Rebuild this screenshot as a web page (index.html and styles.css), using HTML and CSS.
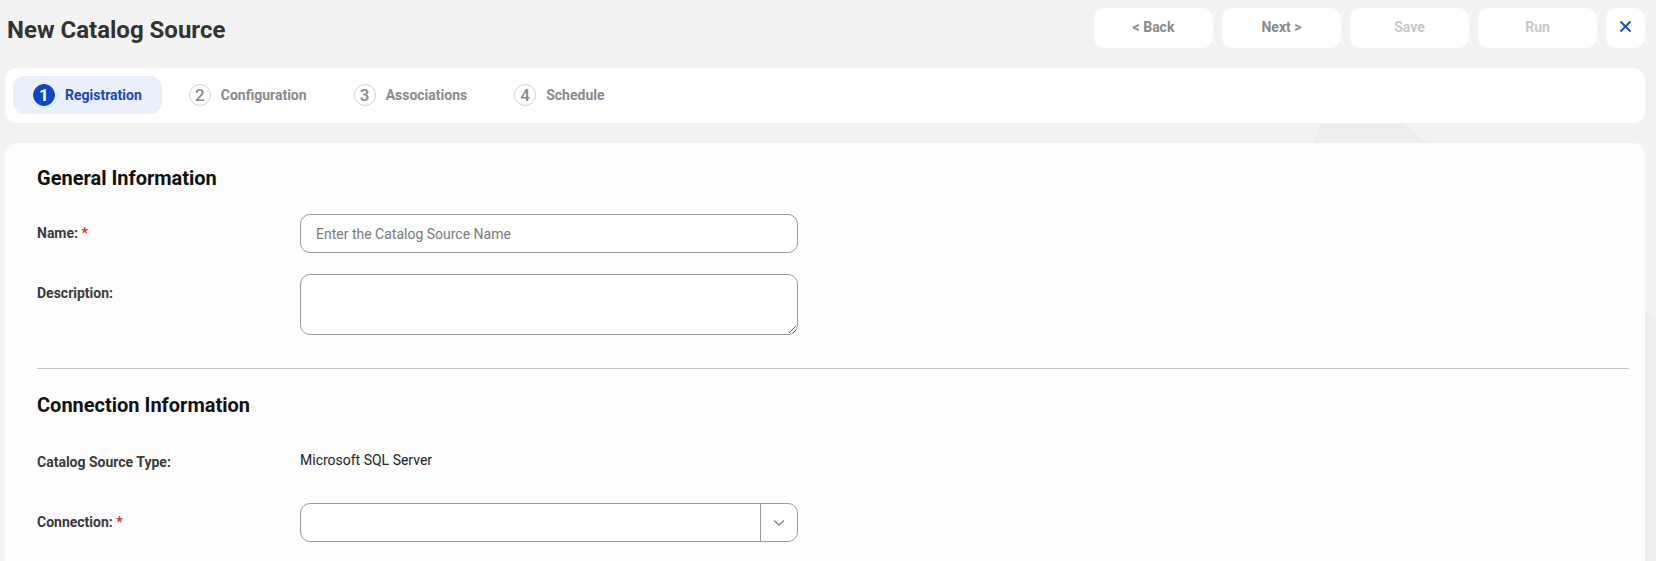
FILE: index.html
```html
<!DOCTYPE html>
<html lang="en">
<head>
    <meta charset="UTF-8">
    <meta name="viewport" content="width=device-width, initial-scale=1.0">
    <title>New Catalog Source</title>
    <link rel="stylesheet" href="styles.css">
</head>
<body>
    <div class="page">
        <header class="top-bar">
            <h1 class="page-title">New Catalog Source</h1>
            <div class="actions">
                <button class="action-btn">&lt; Back</button>
                <button class="action-btn">Next &gt;</button>
                <button class="action-btn disabled">Save</button>
                <button class="action-btn disabled">Run</button>
                <button class="close-btn" aria-label="Close">
                    <svg width="13" height="13" viewBox="0 0 13 13">
                        <path d="M1.5 1.5 L11.5 11.5 M11.5 1.5 L1.5 11.5" stroke="#1a4bc9" stroke-width="1.8" fill="none"/>
                    </svg>
                </button>
            </div>
        </header>

        <nav class="stepper">
            <div class="step active"><span class="step-num">1</span>Registration</div>
            <div class="step"><span class="step-num">2</span>Configuration</div>
            <div class="step"><span class="step-num">3</span>Associations</div>
            <div class="step"><span class="step-num">4</span>Schedule</div>
        </nav>

        <main class="form-card">
            <section class="form-section">
                <h2>General Information</h2>
                <div class="row">
                    <label for="name">Name: <span class="req">*</span></label>
                    <input type="text" id="name" class="text-input" placeholder="Enter the Catalog Source Name">
                </div>
                <div class="row">
                    <label for="desc">Description:</label>
                    <textarea id="desc" class="text-area"></textarea>
                </div>
            </section>

            <hr class="divider">

            <section class="form-section second">
                <h2>Connection Information</h2>
                <div class="row">
                    <label>Catalog Source Type:</label>
                    <span class="value">Microsoft SQL Server</span>
                </div>
                <div class="row">
                    <label>Connection: <span class="req">*</span></label>
                    <div class="select">
                        <div class="select-value"></div>
                        <div class="select-arrow">
                            <svg width="12" height="8" viewBox="0 0 12 8">
                                <polyline points="1,1.5 6,6 11,1.5" stroke="#8a8a8a" stroke-width="1.5" fill="none"/>
                            </svg>
                        </div>
                    </div>
                </div>
            </section>
        </main>
    </div>
</body>
</html>
```

FILE: styles.css
```css
body {
    margin: 0;
    font-family: Roboto, "Liberation Sans", Arial, sans-serif;
    background-color: #f3f3f3;
    background-image: url("data:image/svg+xml;utf8,<svg xmlns='http://www.w3.org/2000/svg' width='1656' height='561'><polygon points='1340,75 1656,318 1656,561 1146,561' fill='%23eeeeee'/></svg>");
    background-repeat: no-repeat;
    color: #333;
}
.page {
    padding: 8px 11px 0 5px;
}
.top-bar {
    display: flex;
    justify-content: space-between;
    align-items: flex-start;
}
.page-title {
    margin: 8px 0 0 2px;
    font-size: 24px;
    line-height: 28px;
    font-weight: 700;
    color: #333;
}
.actions {
    display: flex;
    gap: 9px;
}
.action-btn {
    width: 119px;
    height: 40px;
    border: none;
    border-radius: 11px;
    background: #fff;
    font-family: inherit;
    font-size: 14px;
    font-weight: 700;
    color: #8a8a8a;
    padding: 0 0 3px;
    cursor: pointer;
}
.action-btn.disabled {
    color: #c8c8c8;
}
.close-btn {
    width: 39px;
    height: 40px;
    border: none;
    border-radius: 11px;
    background: #fff;
    display: flex;
    align-items: center;
    justify-content: center;
    padding: 0 0 3px;
}
.stepper {
    margin-top: 20px;
    background: #fff;
    border-radius: 12px;
    height: 55px;
    box-sizing: border-box;
    padding: 8px;
    display: flex;
    gap: 7px;
}
.step {
    display: flex;
    align-items: center;
    gap: 10px;
    padding: 0 20px;
    height: 38px;
    border-radius: 12px;
    font-size: 14px;
    font-weight: 700;
    color: #8a8a8a;
}
.step-num {
    width: 22px;
    height: 22px;
    box-sizing: border-box;
    border-radius: 50%;
    border: 1.5px solid #d4d4d4;
    display: flex;
    align-items: center;
    justify-content: center;
    font-size: 17px;
    font-weight: 500;
    color: #8a8a8a;
}
.step.active {
    background: #e9f0fc;
    color: #1b45c0;
}
.step.active .step-num {
    background: #0c48c6;
    border-color: #0c48c6;
    color: #fff;
    font-weight: 700;
}
.form-card {
    margin-top: 20px;
    background: #fdfdfd;
    border-radius: 12px 12px 0 0;
    padding: 23px 16px 40px 32px;
    min-height: 420px;
}
.form-section h2 {
    margin: 0 0 24px;
    font-size: 20px;
    line-height: 24px;
    font-weight: 700;
    color: #111;
}
.form-section.second h2 {
    margin-bottom: 26px;
}
.row {
    display: flex;
    align-items: flex-start;
    margin-bottom: 21px;
}
.row label {
    width: 263px;
    flex-shrink: 0;
    font-size: 14px;
    font-weight: 700;
    line-height: 39px;
    color: #3a3a3a;
}
.req {
    color: #e32626;
}
.text-input {
    width: 498px;
    height: 39px;
    box-sizing: border-box;
    border: 1px solid #9a9a9a;
    border-radius: 10px;
    padding: 0 15px;
    font-family: inherit;
    font-size: 14px;
    color: #333;
    background: #fff;
}
.text-input::placeholder {
    color: #7a7a7a;
}
.text-area {
    width: 498px;
    height: 61px;
    box-sizing: border-box;
    border: 1px solid #9a9a9a;
    border-radius: 10px;
    padding: 8px 15px;
    font-family: inherit;
    font-size: 14px;
    resize: vertical;
    background: #fff;
}
.divider {
    border: none;
    border-top: 1px solid #c6c6c6;
    margin: 33px 0 24px;
}
.value {
    font-size: 14px;
    line-height: 35px;
    color: #222;
}
.select {
    width: 498px;
    height: 39px;
    box-sizing: border-box;
    border: 1px solid #9a9a9a;
    border-radius: 10px;
    display: flex;
    background: #fff;
}
.select-value {
    flex: 1;
}
.select-arrow {
    width: 36px;
    border-left: 1px solid #9a9a9a;
    display: flex;
    align-items: center;
    justify-content: center;
}
```
